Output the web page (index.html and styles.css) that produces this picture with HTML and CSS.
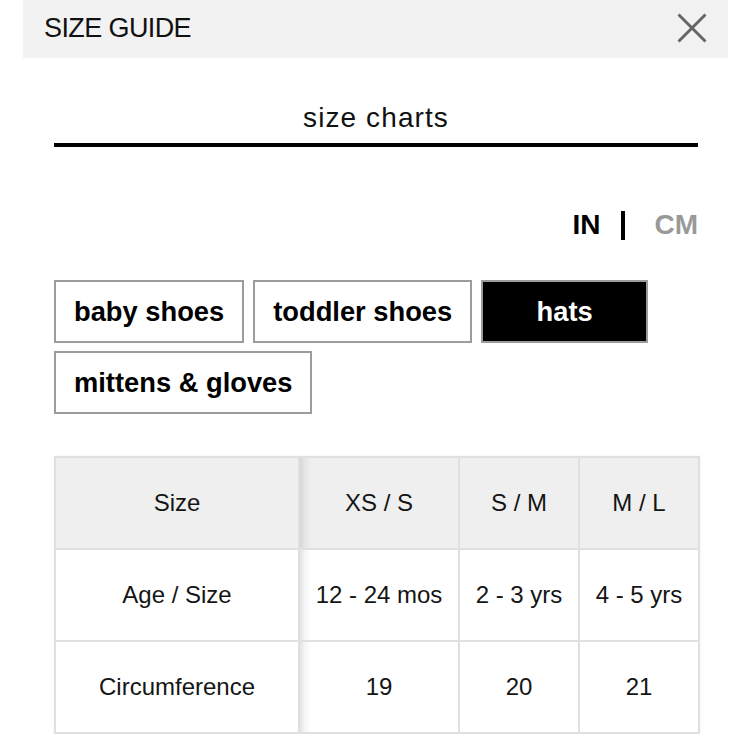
FILE: index.html
```html
<!DOCTYPE html>
<html>
<head>
<meta charset="utf-8">
<link rel="stylesheet" href="styles.css">
</head>
<body>
<header class="topbar">
  <div class="topbar-title">SIZE GUIDE</div>
  <svg class="close" width="30" height="30" viewBox="0 0 30 30"><path d="M1.5 1.5 L28.5 28.5 M28.5 1.5 L1.5 28.5" stroke="#666" stroke-width="3" fill="none"/></svg>
</header>
<main class="content">
  <h2 class="section-title">size charts</h2>
  <div class="units">
    <span class="unit active">IN</span>
    <span class="unit-sep"></span>
    <span class="unit">CM</span>
  </div>
  <div class="tabs">
    <div class="tab">baby shoes</div>
    <div class="tab">toddler shoes</div>
    <div class="tab selected">hats</div>
    <div class="tab">mittens &amp; gloves</div>
  </div>
  <table class="chart">
    <colgroup><col class="c1"><col class="c2"><col class="c3"><col class="c4"></colgroup>
    <tr class="head"><td>Size</td><td class="shade">XS / S</td><td>S / M</td><td>M / L</td></tr>
    <tr><td>Age / Size</td><td class="shade">12 - 24 mos</td><td>2 - 3 yrs</td><td>4 - 5 yrs</td></tr>
    <tr><td>Circumference</td><td class="shade">19</td><td>20</td><td>21</td></tr>
  </table>
</main>
</body>
</html>
```
FILE: styles.css
```css
html, body { margin: 0; padding: 0; background: #fff; }
body { font-family: "Liberation Sans", Arial, sans-serif; color: #111; }

.topbar {
  margin: 0 24px 0 23px;
  height: 58px;
  box-sizing: border-box;
  background: #f2f2f2;
  display: flex;
  align-items: center;
  justify-content: space-between;
  padding: 0 21px 3px 21px;
}
.topbar-title {
  font-size: 27px;
  line-height: 32px;
  letter-spacing: -0.6px;
  color: #111;
}
.close { display: block; }

.content { padding: 0 54px; }

.section-title {
  margin: 45px 0 0 0;
  font-size: 28px;
  line-height: 30px;
  font-weight: normal;
  letter-spacing: 1.1px;
  text-align: center;
  padding-bottom: 10px;
  border-bottom: 4px solid #000;
  color: #111;
}

.units {
  margin-top: 62px;
  display: flex;
  justify-content: flex-end;
  align-items: center;
  font-size: 28px;
  line-height: 32px;
  font-weight: bold;
}
.unit { color: #999; }
.unit.active { color: #000; }
.unit-sep {
  width: 4px;
  height: 29px;
  background: #000;
  margin: 0 29px 0 21px;
}

.tabs {
  margin-top: 39px;
  display: flex;
  flex-wrap: wrap;
  gap: 8px 9px;
}
.tab {
  height: 63px;
  box-sizing: border-box;
  border: 2px solid #9c9c9c;
  padding: 0 18px;
  min-width: 167px;
  display: flex;
  align-items: center;
  justify-content: center;
  font-size: 27.3px;
  line-height: 32px;
  font-weight: bold;
  color: #000;
}
.tab.selected { background: #000; color: #fff; border-color: #9c9c9c; }

.chart {
  margin-top: 42px;
  width: 644px;
  border-collapse: collapse;
  table-layout: fixed;
  font-size: 24px;
  color: #151515;
  box-shadow: 0 0 3px rgba(0,0,0,0.06);
}
.c1 { width: 244px; }
.c2 { width: 160px; }
.c3 { width: 120px; }
.c4 { width: 120px; }
.chart td {
  border: 2px solid #e0e0e0;
  height: 92px;
  padding: 0;
  text-align: center;
  vertical-align: middle;
  box-sizing: border-box;
}
.chart tr.head td { background-color: #efefef; }
.chart td.shade {
  background-image: linear-gradient(to right, rgba(0,0,0,0.11), rgba(0,0,0,0.035) 5px, rgba(0,0,0,0) 11px);
}
```
